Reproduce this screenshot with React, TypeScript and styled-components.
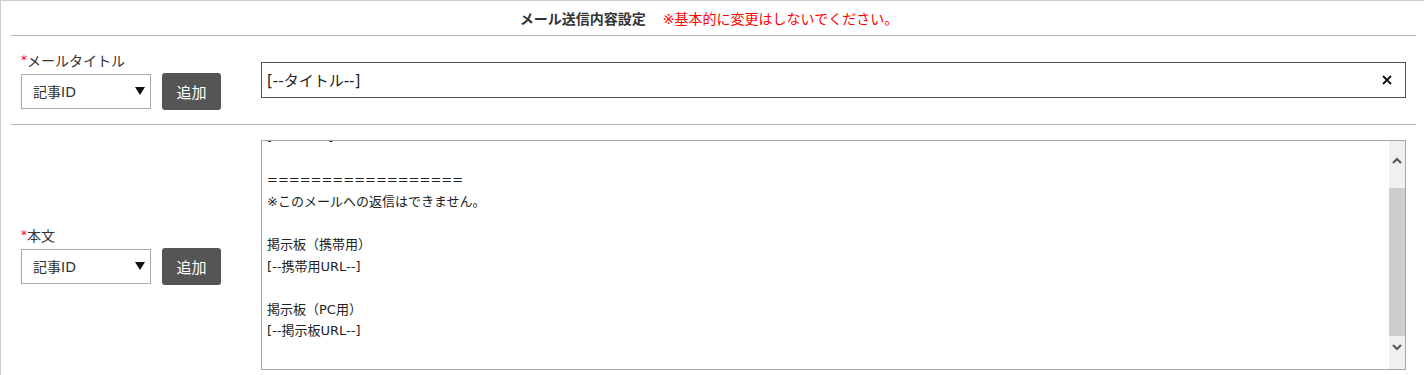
import React from 'react'
import styled, { createGlobalStyle } from 'styled-components'

const GlobalStyle = createGlobalStyle`
  html, body {
    margin: 0;
    padding: 0;
    background: #fff;
  }
  body {
    font-family: "DejaVu Sans", "Noto Sans CJK JP", sans-serif;
    color: #333;
  }
`

const bodyLines = [
  '[------------]',
  '',
  '==================',
  '※このメールへの返信はできません。',
  '',
  '掲示板（携帯用）',
  '[--携帯用URL--]',
  '',
  '掲示板（PC用）',
  '[--掲示板URL--]',
  '',
  '',
]

const ChevronIcon = ({ up }: { up?: boolean }) => (
  <svg width="10" height="7" viewBox="0 0 10 7">
    <polyline
      points={up ? '1,6 5,2 9,6' : '1,1 5,5 9,1'}
      fill="none"
      stroke="#5a5a5a"
      strokeWidth="2.2"
    />
  </svg>
)

const CaretIcon = () => (
  <svg width="10" height="8" viewBox="0 0 10 8">
    <polygon points="0,0 10,0 5,8" fill="#111" />
  </svg>
)

const CloseIcon = () => (
  <svg width="10" height="10" viewBox="0 0 10 10">
    <path d="M1 1 L9 9 M9 1 L1 9" stroke="#111" strokeWidth="1.8" />
  </svg>
)

type FieldProps = {
  label: string
}

const FieldControls = ({ label }: FieldProps) => (
  <LeftBlock>
    <Label>
      <Required>*</Required>
      {label}
    </Label>
    <Controls>
      <SelectBox>
        <span>記事ID</span>
        <CaretIcon />
      </SelectBox>
      <AddButton>追加</AddButton>
    </Controls>
  </LeftBlock>
)

const App = () => {
  return (
    <>
      <GlobalStyle />
      <Frame>
        <Header>
          <HeaderTitle>メール送信内容設定</HeaderTitle>
          <HeaderNote>※基本的に変更はしないでください。</HeaderNote>
        </Header>
        <Row>
          <FieldControls label="メールタイトル" />
          <InputBox>
            <TitleInput defaultValue="[--タイトル--]" />
            <ClearButton>
              <CloseIcon />
            </ClearButton>
          </InputBox>
        </Row>
        <Row $tall>
          <FieldControls label="本文" />
          <TextBox>
            <TextContent>
              <TextInner>
                {bodyLines.map((line, i) => (
                  <TextLine key={i}>{line}</TextLine>
                ))}
              </TextInner>
            </TextContent>
            <ScrollBar>
              <ScrollButton $h={39}>
                <ChevronIcon up />
              </ScrollButton>
              <ScrollGap $h={8} />
              <ScrollThumb />
              <ScrollButton $h={22}>
                <ChevronIcon />
              </ScrollButton>
            </ScrollBar>
          </TextBox>
        </Row>
      </Frame>
    </>
  )
}

const Frame = styled.div`
  box-sizing: border-box;
  width: 1424px;
  height: 375px;
  border-top: 1px solid #cccccc;
  border-left: 1px solid #cccccc;
  padding: 0 8px 0 10px;
  overflow: hidden;
`

const Header = styled.div`
  height: 34px;
  display: flex;
  align-items: center;
  justify-content: center;
  border-bottom: 1px solid #b0b0b0;
  font-size: 14px;
  padding-right: 9px;
`

const HeaderTitle = styled.span`
  font-weight: bold;
  color: #333;
`

const HeaderNote = styled.span`
  color: #ff0000;
  margin-left: 17px;
`

const Row = styled.div<{ $tall?: boolean }>`
  display: flex;
  align-items: center;
  padding: ${p => (p.$tall ? '15px 10px 0 10px' : '0 10px')};
  height: ${p => (p.$tall ? 'auto' : '88px')};
  border-bottom: ${p => (p.$tall ? 'none' : '1px solid #b0b0b0')};
`

const LeftBlock = styled.div`
  width: 240px;
  flex-shrink: 0;
  display: flex;
  flex-direction: column;
`

const Label = styled.div`
  font-size: 14px;
  line-height: 18px;
  height: 20px;
  margin-bottom: 2px;
  color: #333;
`

const Required = styled.span`
  color: #ff0000;
  font-size: 12px;
  vertical-align: 2px;
`

const Controls = styled.div`
  display: flex;
  align-items: center;
  gap: 11px;
  height: 37px;
`

const SelectBox = styled.div`
  box-sizing: border-box;
  width: 130px;
  height: 35px;
  border: 1px solid #aaaaaa;
  display: flex;
  align-items: center;
  justify-content: space-between;
  padding: 0 5px 0 11px;
  font-size: 14px;
  color: #333;
  background: #fff;
`

const AddButton = styled.button`
  box-sizing: border-box;
  width: 59px;
  height: 37px;
  border: none;
  border-radius: 3px;
  background: #555555;
  color: #fff;
  font-family: inherit;
  font-size: 15px;
  padding: 0;
`

const InputBox = styled.div`
  box-sizing: border-box;
  flex: 1;
  height: 36px;
  border: 1px solid #555555;
  display: flex;
  align-items: center;
  margin-top: -1px;
`

const TitleInput = styled.input`
  flex: 1;
  border: none;
  outline: none;
  font-family: inherit;
  font-size: 15px;
  color: #222;
  padding: 0 0 0 5px;
  background: transparent;
`

const ClearButton = styled.span`
  display: flex;
  align-items: center;
  justify-content: center;
  width: 12px;
  margin-right: 12px;
`

const TextBox = styled.div`
  box-sizing: border-box;
  flex: 1;
  height: 230px;
  border: 1px solid #a6a6a6;
  display: flex;
`

const TextContent = styled.div`
  flex: 1;
  overflow: hidden;
  padding: 0 5px;
`

const TextInner = styled.div`
  margin-top: -15px;
`

const TextLine = styled.div`
  font-size: 13px;
  line-height: 21.6px;
  height: 21.6px;
  white-space: pre;
  color: #222;
`

const ScrollBar = styled.div`
  width: 16px;
  background: #f0f0f0;
  display: flex;
  flex-direction: column;
`

const ScrollButton = styled.div<{ $h: number }>`
  height: ${p => p.$h}px;
  display: flex;
  align-items: center;
  justify-content: center;
`

const ScrollGap = styled.div<{ $h: number }>`
  height: ${p => p.$h}px;
`

const ScrollThumb = styled.div`
  height: 148px;
  background: #cdcdcd;
`

export default App
